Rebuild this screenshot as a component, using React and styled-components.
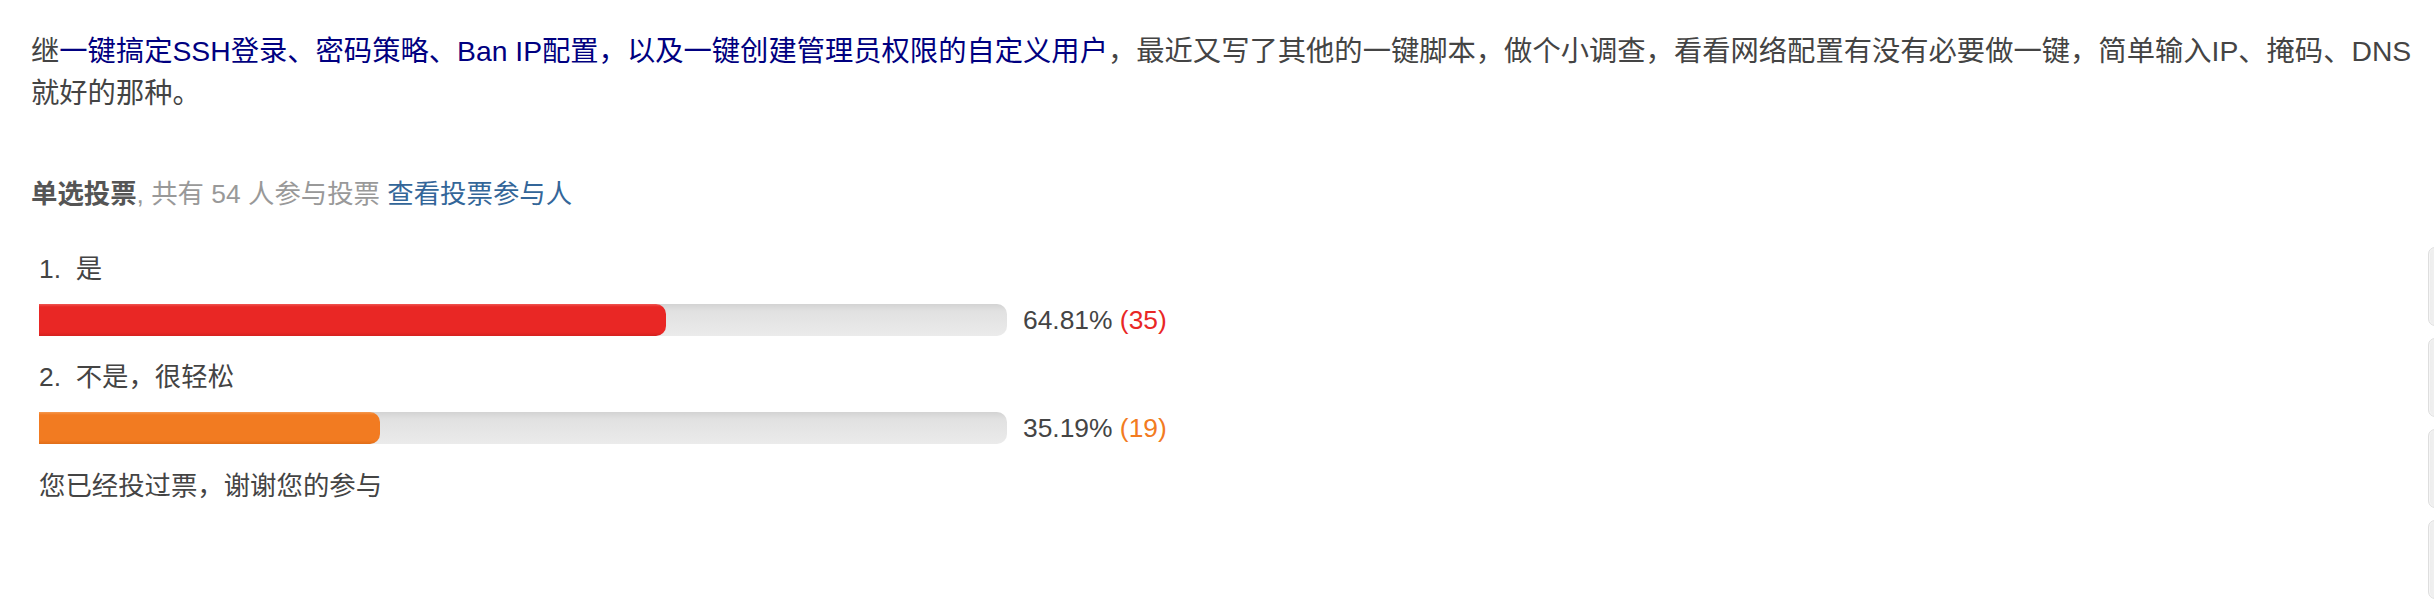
import React from "react";
import styled, { createGlobalStyle } from "styled-components";

const GlobalStyle = createGlobalStyle`
  html, body {
    margin: 0;
    padding: 0;
    background: #ffffff;
  }
  body {
    font-family: "Liberation Sans", "Noto Sans CJK SC", sans-serif;
    color: #444444;
    overflow: hidden;
  }
`;

const Page = styled.div`
  width: 2434px;
  height: 604px;
  box-sizing: border-box;
  padding: 30px 0 0 31px;
`;

const Paragraph = styled.p`
  margin: 0;
  width: 2400px;
  font-size: 28.3px;
  line-height: 42px;
  color: #444444;
`;

const Navy = styled.span`
  color: #000080;
`;

const Poll = styled.div`
  margin-top: 60px;
  font-size: 26.4px;
  line-height: 40px;
`;

const PollHeader = styled.div`
  color: #444444;
`;

const Strong = styled.strong`
  font-weight: 700;
  color: #555555;
`;

const Muted = styled.span`
  color: #999999;
`;

const Link = styled.a`
  color: #336699;
  text-decoration: none;
`;

const OptionList = styled.div`
  margin-top: 35px;
  padding-left: 8px;
  display: flex;
  flex-direction: column;
  gap: 21px;
`;

const Option = styled.div`
  display: flex;
  flex-direction: column;
`;

const OptionLabel = styled.div`
  color: #444444;
  white-space: pre;
`;

const BarRow = styled.div`
  margin-top: 15px;
  display: flex;
  align-items: center;
  gap: 16px;
`;

const Track = styled.div`
  width: 968px;
  height: 32px;
  border-radius: 0 10px 10px 0;
  background: linear-gradient(to bottom, #d3d3d3 0%, #e1e1e1 22%, #e7e7e7 70%, #ebebeb 100%);
  overflow: hidden;
  display: flex;
`;

const Fill = styled.div`
  height: 100%;
  border-radius: 0 10px 10px 0;
  background: ${(p) =>
    p.$tone === "red"
      ? "linear-gradient(to bottom, #ef5652 0%, #e92725 9%, #e92725 88%, #d4211f 100%)"
      : "linear-gradient(to bottom, #f5994f 0%, #f27b21 9%, #f27b21 88%, #e06d18 100%)"};
`;

const Percent = styled.div`
  color: #444444;
  line-height: 32px;
  white-space: pre;
`;

const Count = styled.span`
  color: ${(p) => (p.$tone === "red" ? "#e92725" : "#f27b21")};
`;

const Thanks = styled.div`
  margin-top: 22px;
  padding-left: 8px;
  color: #444444;
`;

const SideDock = styled.div`
  position: fixed;
  top: 247px;
  right: -40px;
  display: flex;
  flex-direction: column;
  gap: 12px;
`;

const SideButton = styled.div`
  width: 46px;
  height: 79px;
  box-sizing: border-box;
  border: 1px solid #dedede;
  border-radius: 7px;
  background: linear-gradient(to right, #ededed 0%, #f8f8f8 40%, #ffffff 100%);
  box-shadow: inset 1px 0 0 #f6f6f6;
`;

const options = [
  { label: "1.\u00a0 是", pct: 64.81, count: 35, tone: "red" },
  { label: "2.\u00a0 不是，很轻松", pct: 35.19, count: 19, tone: "orange" },
];

export default function App() {
  return (
    <>
      <GlobalStyle />
      <Page>
        <Paragraph>
          继<Navy>一键搞定SSH登录、密码策略、Ban IP配置，以及一键创建管理员权限的自定义用户</Navy>，最近又写了其他的一键脚本，做个小调查，看看网络配置有没有必要做一键，简单输入IP、掩码、DNS就好的那种。
        </Paragraph>
        <Poll>
          <PollHeader>
            <Strong>单选投票</Strong>
            <Muted>, 共有 54 人参与投票</Muted> <Link href="#">查看投票参与人</Link>
          </PollHeader>
          <OptionList>
            {options.map((o) => (
              <Option key={o.label}>
                <OptionLabel>{o.label}</OptionLabel>
                <BarRow>
                  <Track>
                    <Fill $tone={o.tone} style={{ width: `${o.pct}%` }} />
                  </Track>
                  <Percent>
                    {o.pct.toFixed(2)}% <Count $tone={o.tone}>({o.count})</Count>
                  </Percent>
                </BarRow>
              </Option>
            ))}
          </OptionList>
          <Thanks>您已经投过票，谢谢您的参与</Thanks>
        </Poll>
      </Page>
      <SideDock>
        <SideButton />
        <SideButton />
        <SideButton />
        <SideButton />
      </SideDock>
    </>
  );
}
